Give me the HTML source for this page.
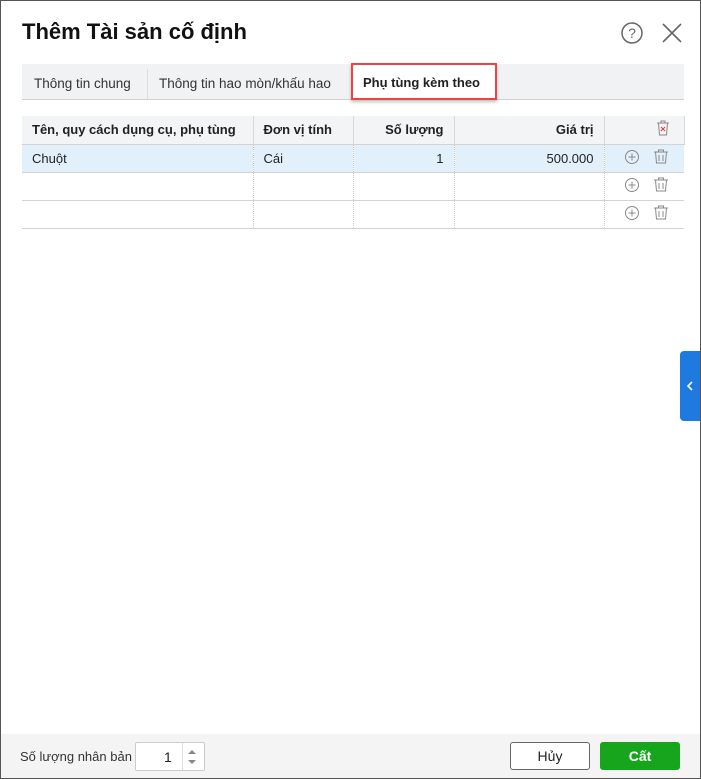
<!DOCTYPE html>
<html><head><meta charset="utf-8"><style>
*{box-sizing:border-box;margin:0;padding:0}
body{width:701px;height:779px;overflow:hidden;font-family:"Liberation Sans","Noto Sans CJK SC",sans-serif;background:#fff;position:relative;color:#212121}
.frame{position:absolute;left:0;top:0;width:701px;height:779px;border:1px solid #555}
.title{position:absolute;left:22px;top:19px;font-size:22px;font-weight:bold;color:#111}
.tabs{position:absolute;left:22px;top:64px;width:662px;height:36px;background:#f1f2f4;border-bottom:1px solid #d0d0d0;font-size:13.5px}
.tab{position:absolute;top:12px;color:#333}
.sel{position:absolute;left:351px;top:63px;width:146px;height:37px;border:2px solid #e94545;box-shadow:0 2px 3px rgba(0,0,0,.25);background:#fff;font-weight:bold;font-size:13px;padding:10px 0 0 10px;white-space:nowrap}
table{position:absolute;left:22px;top:116px;border-collapse:collapse;font-size:13px;table-layout:fixed;width:662px}
td{height:28px;border-bottom:1px solid #d3d3d3;border-right:1px dotted #ccc;padding:0 10px;white-space:nowrap;overflow:hidden}
tr.h td{background:#f3f4f6;font-weight:bold;border-right:1px solid #d8d8d8;height:28px}
tr.s td{background:#e2f0fc}
td.r{text-align:right}
td:last-child{border-right:none}
.foot{position:absolute;left:1px;top:734px;width:699px;height:44px;background:#f4f4f4}
.btn{position:absolute;top:742px;height:28px;border-radius:3px;font-size:14px;text-align:center;line-height:26px}
</style></head><body>
<div class="title">Thêm Tài sản cố định</div>
<svg style="position:absolute;left:620px;top:21px" width="24" height="24" viewBox="0 0 24 24"><circle cx="12" cy="12" r="10" fill="none" stroke="#666" stroke-width="1.5"/><text x="12" y="17" text-anchor="middle" font-size="14" fill="#666" font-family="Liberation Sans">?</text></svg>
<svg style="position:absolute;left:661px;top:22px" width="22" height="22" viewBox="0 0 22 22"><path d="M2 2L20 20M20 2L2 20" stroke="#666" stroke-width="1.6"/></svg>
<div class="tabs"><span class="tab" style="left:12px">Thông tin chung</span><div style="position:absolute;left:125px;top:5px;width:1px;height:30px;background:#ddd"></div><span class="tab" style="left:137px">Thông tin hao mòn/khấu hao</span></div>
<div class="sel">Phụ tùng kèm theo</div>
<table>
<colgroup><col style="width:231px"><col style="width:100px"><col style="width:101px"><col style="width:150px"><col style="width:80px"></colgroup>
<tr class="h"><td>Tên, quy cách dụng cụ, phụ tùng</td><td>Đơn vị tính</td><td class="r">Số lượng</td><td class="r">Giá trị</td><td style="text-align:right;padding-right:14px"><svg width="14" height="16" viewBox="0 0 14 16"><path d="M1 3h12M5 3V1h4v2M2.5 3l1 12h7l1-12" fill="none" stroke="#888"/><path d="M5 7l4 4M9 7l-4 4" stroke="#e33"/></svg></td></tr>
<tr class="s"><td>Chuột</td><td>Cái</td><td class="r">1</td><td class="r">500.000</td><td></td></tr>
<tr><td></td><td></td><td></td><td></td><td></td></tr>
<tr><td></td><td></td><td></td><td></td><td></td></tr>
</table>
<svg style="position:absolute;left:624px;top:148px" width="50" height="80" viewBox="0 0 50 80">
<g id="g"><circle cx="8" cy="9" r="6.5" fill="none" stroke="#888"/><path d="M4.5 9h7M8 5.5v7" stroke="#888"/><path d="M30 4h14M34.5 4V2h5v2M31.5 4l1 11h9l1-11M35 7v6M39 7v6" fill="none" stroke="#888"/></g>
<use href="#g" y="28"/><use href="#g" y="56"/></svg>
<div style="position:absolute;left:680px;top:351px;width:21px;height:70px;background:#1f7ae0;border-radius:4px 0 0 4px"><svg width="21" height="70"><path d="M12 31l-4 4 4 4" fill="none" stroke="#fff" stroke-width="1.6"/></svg></div>
<div class="foot"></div>
<div style="position:absolute;left:20px;top:749px;font-size:13px;color:#333">Số lượng nhân bản</div>
<div style="position:absolute;left:135px;top:742px;width:70px;height:29px;border:1px solid #ccc;background:#fff;border-radius:2px"><span style="position:absolute;left:28px;top:6px;font-size:14px">1</span><div style="position:absolute;left:46px;top:0;width:1px;height:27px;background:#ddd"></div><svg style="position:absolute;left:49px;top:4px" width="14" height="20"><path d="M3 7l4-4 4 4z M3 13l4 4 4-4z" fill="#888"/></svg></div>
<div class="btn" style="left:510px;width:80px;border:1px solid #666;background:#fff;color:#222">Hủy</div>
<div class="btn" style="left:600px;width:80px;background:#16a51c;color:#fff;border:1px solid #16a51c;font-weight:bold">Cất</div>
<div class="frame"></div>
</body></html>
